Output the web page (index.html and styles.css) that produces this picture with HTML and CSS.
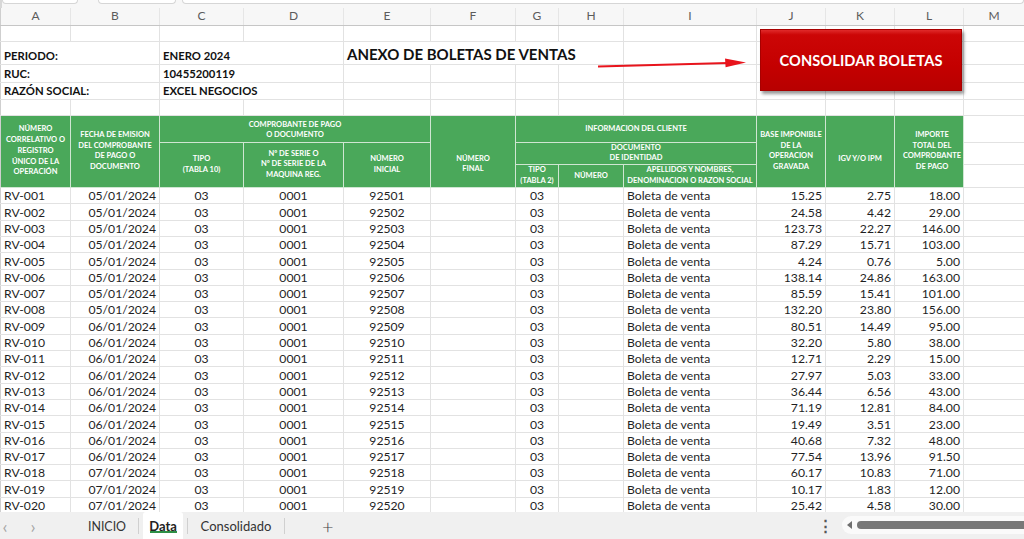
FILE: index.html
```html
<!DOCTYPE html>
<html lang="es">
<head>
<meta charset="utf-8">
<title>Anexo de boletas de ventas</title>
<link rel="stylesheet" href="styles.css">
</head>
<body>
<div class="topstrip">
  <span class="tbox b1"></span><span class="tbox b2"></span><span class="tbox b3"></span>
</div>
<div class="sheet">
  <table class="grid">
    <colgroup>
      <col class="w70"><col class="w89"><col class="w84"><col class="w100"><col class="w87"><col class="w85"><col class="w43"><col class="w65"><col class="w133"><col class="w69"><col class="w69"><col class="w69"><col class="w61">
    </colgroup>
    <tr class="colhead">
      <td>A</td><td>B</td><td>C</td><td>D</td><td>E</td><td>F</td><td>G</td><td>H</td><td>I</td><td>J</td><td>K</td><td>L</td><td>M</td>
    </tr>
    <tr class="r16"><td></td><td></td><td></td><td></td><td></td><td></td><td></td><td></td><td></td><td></td><td></td><td></td><td></td></tr>
    <tr class="r23 info"><td colspan="2" class="b">PERIODO:</td><td colspan="2" class="b">ENERO 2024</td><td colspan="4" class="title">ANEXO DE BOLETAS DE VENTAS</td><td></td><td></td><td></td><td></td><td></td></tr>
    <tr class="r18 info"><td colspan="2" class="b">RUC:</td><td colspan="2" class="b">10455200119</td><td></td><td></td><td></td><td></td><td></td><td></td><td></td><td></td><td></td></tr>
    <tr class="r17 info"><td colspan="2" class="b">RAZÓN SOCIAL:</td><td colspan="2" class="b">EXCEL NEGOCIOS</td><td></td><td></td><td></td><td></td><td></td><td></td><td></td><td></td><td></td></tr>
    <tr class="r16"><td></td><td></td><td></td><td></td><td></td><td></td><td></td><td></td><td></td><td></td><td></td><td></td><td></td></tr>
    <tr class="g1 gh">
      <td rowspan="3" class="mid">NÚMERO<br>CORRELATIVO O<br>REGISTRO<br>ÚNICO DE LA<br>OPERACIÓN</td>
      <td rowspan="3" class="mid">FECHA DE EMISION<br>DEL COMPROBANTE<br>DE PAGO O<br>DOCUMENTO</td>
      <td colspan="3" class="top">COMPROBANTE DE PAGO<br>O DOCUMENTO</td>
      <td rowspan="3" class="low">NÚMERO<br>FINAL</td>
      <td colspan="3" class="top one">INFORMACION DEL CLIENTE</td>
      <td rowspan="3" class="mid">BASE IMPONIBLE<br>DE LA<br>OPERACION<br>GRAVADA</td>
      <td rowspan="3" class="low">IGV Y/O IPM</td>
      <td rowspan="3" class="mid imp">IMPORTE<br>TOTAL DEL<br>COMPROBANTE<br>DE PAGO</td>
      <td class="plain"></td>
    </tr>
    <tr class="g2 gh">
      <td rowspan="2" class="mid">TIPO<br>(TABLA 10)</td>
      <td rowspan="2" class="mid">Nº DE SERIE O<br>Nº DE SERIE DE LA<br>MAQUINA REG.</td>
      <td rowspan="2" class="mid">NÚMERO<br>INICIAL</td>
      <td colspan="3" class="mid">DOCUMENTO<br>DE IDENTIDAD</td>
      <td class="plain"></td>
    </tr>
    <tr class="g3 gh">
      <td class="mid">TIPO<br>(TABLA 2)</td>
      <td class="mid">NÚMERO</td>
      <td class="mid">APELLIDOS Y NOMBRES,<br>DENOMINACION O RAZON SOCIAL</td>
      <td class="plain"></td>
    </tr>
    <tr class="d"><td>RV-001</td><td class="r">05/01/2024</td><td class="c">03</td><td class="c">0001</td><td class="c">92501</td><td></td><td class="c">03</td><td></td><td>Boleta de venta</td><td class="r">15.25</td><td class="r">2.75</td><td class="r">18.00</td><td></td></tr>
    <tr class="d"><td>RV-002</td><td class="r">05/01/2024</td><td class="c">03</td><td class="c">0001</td><td class="c">92502</td><td></td><td class="c">03</td><td></td><td>Boleta de venta</td><td class="r">24.58</td><td class="r">4.42</td><td class="r">29.00</td><td></td></tr>
    <tr class="d"><td>RV-003</td><td class="r">05/01/2024</td><td class="c">03</td><td class="c">0001</td><td class="c">92503</td><td></td><td class="c">03</td><td></td><td>Boleta de venta</td><td class="r">123.73</td><td class="r">22.27</td><td class="r">146.00</td><td></td></tr>
    <tr class="d"><td>RV-004</td><td class="r">05/01/2024</td><td class="c">03</td><td class="c">0001</td><td class="c">92504</td><td></td><td class="c">03</td><td></td><td>Boleta de venta</td><td class="r">87.29</td><td class="r">15.71</td><td class="r">103.00</td><td></td></tr>
    <tr class="d"><td>RV-005</td><td class="r">05/01/2024</td><td class="c">03</td><td class="c">0001</td><td class="c">92505</td><td></td><td class="c">03</td><td></td><td>Boleta de venta</td><td class="r">4.24</td><td class="r">0.76</td><td class="r">5.00</td><td></td></tr>
    <tr class="d"><td>RV-006</td><td class="r">05/01/2024</td><td class="c">03</td><td class="c">0001</td><td class="c">92506</td><td></td><td class="c">03</td><td></td><td>Boleta de venta</td><td class="r">138.14</td><td class="r">24.86</td><td class="r">163.00</td><td></td></tr>
    <tr class="d"><td>RV-007</td><td class="r">05/01/2024</td><td class="c">03</td><td class="c">0001</td><td class="c">92507</td><td></td><td class="c">03</td><td></td><td>Boleta de venta</td><td class="r">85.59</td><td class="r">15.41</td><td class="r">101.00</td><td></td></tr>
    <tr class="d"><td>RV-008</td><td class="r">05/01/2024</td><td class="c">03</td><td class="c">0001</td><td class="c">92508</td><td></td><td class="c">03</td><td></td><td>Boleta de venta</td><td class="r">132.20</td><td class="r">23.80</td><td class="r">156.00</td><td></td></tr>
    <tr class="d"><td>RV-009</td><td class="r">06/01/2024</td><td class="c">03</td><td class="c">0001</td><td class="c">92509</td><td></td><td class="c">03</td><td></td><td>Boleta de venta</td><td class="r">80.51</td><td class="r">14.49</td><td class="r">95.00</td><td></td></tr>
    <tr class="d"><td>RV-010</td><td class="r">06/01/2024</td><td class="c">03</td><td class="c">0001</td><td class="c">92510</td><td></td><td class="c">03</td><td></td><td>Boleta de venta</td><td class="r">32.20</td><td class="r">5.80</td><td class="r">38.00</td><td></td></tr>
    <tr class="d"><td>RV-011</td><td class="r">06/01/2024</td><td class="c">03</td><td class="c">0001</td><td class="c">92511</td><td></td><td class="c">03</td><td></td><td>Boleta de venta</td><td class="r">12.71</td><td class="r">2.29</td><td class="r">15.00</td><td></td></tr>
    <tr class="d"><td>RV-012</td><td class="r">06/01/2024</td><td class="c">03</td><td class="c">0001</td><td class="c">92512</td><td></td><td class="c">03</td><td></td><td>Boleta de venta</td><td class="r">27.97</td><td class="r">5.03</td><td class="r">33.00</td><td></td></tr>
    <tr class="d"><td>RV-013</td><td class="r">06/01/2024</td><td class="c">03</td><td class="c">0001</td><td class="c">92513</td><td></td><td class="c">03</td><td></td><td>Boleta de venta</td><td class="r">36.44</td><td class="r">6.56</td><td class="r">43.00</td><td></td></tr>
    <tr class="d"><td>RV-014</td><td class="r">06/01/2024</td><td class="c">03</td><td class="c">0001</td><td class="c">92514</td><td></td><td class="c">03</td><td></td><td>Boleta de venta</td><td class="r">71.19</td><td class="r">12.81</td><td class="r">84.00</td><td></td></tr>
    <tr class="d"><td>RV-015</td><td class="r">06/01/2024</td><td class="c">03</td><td class="c">0001</td><td class="c">92515</td><td></td><td class="c">03</td><td></td><td>Boleta de venta</td><td class="r">19.49</td><td class="r">3.51</td><td class="r">23.00</td><td></td></tr>
    <tr class="d"><td>RV-016</td><td class="r">06/01/2024</td><td class="c">03</td><td class="c">0001</td><td class="c">92516</td><td></td><td class="c">03</td><td></td><td>Boleta de venta</td><td class="r">40.68</td><td class="r">7.32</td><td class="r">48.00</td><td></td></tr>
    <tr class="d"><td>RV-017</td><td class="r">06/01/2024</td><td class="c">03</td><td class="c">0001</td><td class="c">92517</td><td></td><td class="c">03</td><td></td><td>Boleta de venta</td><td class="r">77.54</td><td class="r">13.96</td><td class="r">91.50</td><td></td></tr>
    <tr class="d"><td>RV-018</td><td class="r">07/01/2024</td><td class="c">03</td><td class="c">0001</td><td class="c">92518</td><td></td><td class="c">03</td><td></td><td>Boleta de venta</td><td class="r">60.17</td><td class="r">10.83</td><td class="r">71.00</td><td></td></tr>
    <tr class="d"><td>RV-019</td><td class="r">07/01/2024</td><td class="c">03</td><td class="c">0001</td><td class="c">92519</td><td></td><td class="c">03</td><td></td><td>Boleta de venta</td><td class="r">10.17</td><td class="r">1.83</td><td class="r">12.00</td><td></td></tr>
    <tr class="d"><td>RV-020</td><td class="r">07/01/2024</td><td class="c">03</td><td class="c">0001</td><td class="c">92520</td><td></td><td class="c">03</td><td></td><td>Boleta de venta</td><td class="r">25.42</td><td class="r">4.58</td><td class="r">30.00</td><td></td></tr>
  </table>
  <svg class="arrow" width="160" height="20" viewBox="0 0 160 20">
    <path d="M0 12.5 L130 9" stroke="#e8141c" stroke-width="2.2" fill="none"/>
    <path d="M127 4.5 L148 8.6 L127.6 13.2 Z" fill="#e8141c"/>
  </svg>
  <div class="btn">CONSOLIDAR BOLETAS</div>
</div>
<div class="tabbar">
  <span class="nav">&lsaquo;</span>
  <span class="nav n2">&rsaquo;</span>
  <span class="tab t-inicio">INICIO</span>
  <span class="sep"></span>
  <span class="tab active">Data</span>
  <span class="sep"></span>
  <span class="tab t-cons">Consolidado</span>
  <span class="sep"></span>
  <span class="plus">+</span>
  <span class="spacer"></span>
  <span class="dots">&#8942;</span>
  <div class="scroll">
    <span class="sarrow"></span>
    <span class="thumb"></span>
  </div>
</div>
</body>
</html>
```
FILE: styles.css
```css
html, body {
  margin: 0;
  padding: 0;
  background: #ffffff;
  width: 1024px;
  height: 539px;
  overflow: hidden;
  font-family: Lato, "Open Sans", sans-serif;
  color: #1f1f1f;
}

.topstrip {
  height: 8px;
  background: #f7f7f7;
  position: relative;
  display: flex;
  border-left: 2px solid #d8d8d8;
  box-sizing: border-box;
}
.tbox {
  display: block;
  height: 3px;
  background: #ffffff;
  border: 1px solid #d6d6d6;
  border-top: none;
  border-radius: 0 0 4px 4px;
}
.b1 { width: 74px; }
.b2 { width: 76px; margin-left: 20px; }
.b3 { flex: 1; margin-left: 6px; }

.sheet {
  position: relative;
  height: 504px;
  overflow: hidden;
}

.grid {
  border-collapse: collapse;
  table-layout: fixed;
  width: 1024px;
}
.w70 { width: 70px; }
.w89 { width: 89px; }
.w84 { width: 84px; }
.w100 { width: 100px; }
.w87 { width: 87px; }
.w85 { width: 85px; }
.w43 { width: 43px; }
.w65 { width: 65px; }
.w133 { width: 133px; }
.w69 { width: 69px; }
.w61 { width: 61px; }

.grid td {
  border: 1px solid #e2e2e2;
  padding: 0 3px;
  overflow: hidden;
  white-space: nowrap;
  font-size: 12.2px;
  line-height: 14px;
  vertical-align: bottom;
}
.grid tr > td:first-child { border-left: 1px solid #cfcfcf; }

.colhead { height: 17px; background: #f7f7f7; }
.colhead td {
  text-align: center;
  vertical-align: middle;
  color: #5c5c5c;
  font-size: 12px;
  border-top: none;
  border-color: #e6e6e6;
  border-bottom: 1px solid #c6c6c6;
}

.r16 { height: 16px; }
.r23 { height: 23px; }
.r18 { height: 18px; }
.r17 { height: 17px; }

.info td { padding-bottom: 1px; }
.info .b { font-weight: 700; font-size: 11.3px; color: #111; }
.info .title { font-weight: 700; font-size: 15px; color: #111; padding-bottom: 3px; }

.g1 { height: 27px; }
.g2 { height: 22px; }
.g3 { height: 23px; }
.gh td {
  background: #4aa85a;
  color: #ffffff;
  font-weight: 700;
  font-size: 7.5px;
  line-height: 10.8px;
  text-align: center;
  border: 1px solid #cfe6d2;
  padding: 0;
  white-space: nowrap;
  overflow: visible;
}
.gh td.mid { vertical-align: middle; }
.gh td.top { vertical-align: top; padding-top: 4px; }
.gh td.top.one { padding-top: 8px; }
.gh td.low { vertical-align: top; padding-top: 38px; }
.gh td.imp { padding-left: 6px; }
.gh td.plain {
  background: #ffffff;
  border: 1px solid #e2e2e2;
}

.d { height: 16.3px; }
.d td { line-height: 13px; padding-bottom: 1px; }
.d td.r { text-align: right; padding-right: 3px; }
.d td.c { text-align: center; }

.btn {
  position: absolute;
  left: 760px;
  top: 21px;
  width: 202px;
  height: 62px;
  box-sizing: border-box;
  background: linear-gradient(#e02a2a 0%, #cc0606 8%, #c40000 60%, #b80000 100%);
  border: 1px solid #a80000;
  box-shadow: 2px 3px 3px rgba(0, 0, 0, 0.4);
  color: #ffffff;
  font-weight: 700;
  font-size: 14.6px;
  display: flex;
  align-items: center;
  justify-content: center;
  letter-spacing: 0.1px;
}

.arrow {
  position: absolute;
  left: 598px;
  top: 46px;
}

.tabbar {
  height: 27px;
  background: #f0f0f0;
  display: flex;
  align-items: stretch;
  font-size: 13px;
  color: #333333;
}
.nav {
  width: 10px;
  color: #a6a6a6;
  font-size: 18px;
  display: flex;
  align-items: center;
  justify-content: center;
}
.nav.n2 { margin-left: 18px; }
.tab {
  display: flex;
  align-items: center;
  justify-content: center;
  padding-top: 1px;
}
.t-inicio { margin-left: 50px; width: 38px; font-size: 12.4px; margin-right: 12px; }
.sep {
  width: 1px;
  background: #d0d0d0;
  margin: 6px 0 5px 0;
}
.active {
  margin-left: 4px;
  width: 40px;
  background: #ffffff;
  font-weight: 700;
  color: #222;
  border-radius: 3px 3px 0 0;
  position: relative;
}
.active::after {
  content: "";
  position: absolute;
  left: 7px;
  right: 6px;
  bottom: 6px;
  height: 2px;
  background: #2f8f46;
}
.active + .sep { margin-left: 4px; }
.t-cons { margin-left: 12px; margin-right: 12px; width: 72px; }
.plus {
  margin-left: 37px;
  font-size: 20px;
  font-weight: 300;
  color: #444;
  display: flex;
  align-items: center;
}
.spacer { flex: 1; }
.dots {
  display: flex;
  align-items: center;
  font-size: 15px;
  color: #555;
  margin-right: 9px;
  font-weight: 700;
}
.scroll {
  width: 182px;
  margin: 4px 0 5px 0;
  background: #fafafa;
  border-radius: 9px 0 0 9px;
  display: flex;
  align-items: center;
  padding-left: 5px;
  box-sizing: border-box;
}
.sarrow {
  width: 0;
  height: 0;
  border-top: 4px solid transparent;
  border-bottom: 4px solid transparent;
  border-right: 5px solid #6f6f6f;
  margin-right: 5px;
}
.thumb {
  flex: 1;
  height: 8px;
  background: #787878;
  border-radius: 4px 0 0 4px;
}
```
